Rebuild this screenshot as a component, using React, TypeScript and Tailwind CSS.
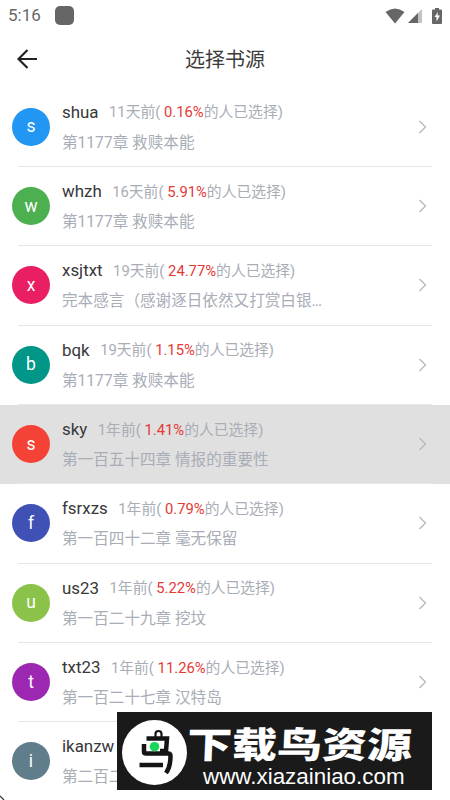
interface BookSource {
  name: string
  color: string
  time: string
  percent: string
  chapter: string
  active?: boolean
}

const sources: BookSource[] = [
  { name: 'shua', color: 'bg-[#2196f3]', time: '11天前', percent: '0.16%', chapter: '第1177章 救赎本能' },
  { name: 'whzh', color: 'bg-[#4caf50]', time: '16天前', percent: '5.91%', chapter: '第1177章 救赎本能' },
  { name: 'xsjtxt', color: 'bg-[#e91e63]', time: '19天前', percent: '24.77%', chapter: '完本感言（感谢逐日依然又打赏白银…' },
  { name: 'bqk', color: 'bg-[#009688]', time: '19天前', percent: '1.15%', chapter: '第1177章 救赎本能' },
  { name: 'sky', color: 'bg-[#f44336]', time: '1年前', percent: '1.41%', chapter: '第一百五十四章 情报的重要性', active: true },
  { name: 'fsrxzs', color: 'bg-[#3f51b5]', time: '1年前', percent: '0.79%', chapter: '第一百四十二章 毫无保留' },
  { name: 'us23', color: 'bg-[#8bc34a]', time: '1年前', percent: '5.22%', chapter: '第一百二十九章 挖坟' },
  { name: 'txt23', color: 'bg-[#9c27b0]', time: '1年前', percent: '11.26%', chapter: '第一百二十七章 汉特岛' },
]

function StatusBar() {
  return (
    <div className="flex h-[31px] shrink-0 items-center pl-2 pr-2 text-[#666]">
      <span className="text-[17px] leading-none">5:16</span>
      <span className="ml-[14px] h-[19px] w-[19px] rounded-[5px] bg-[#666]" />
      <svg className="ml-auto" width="20" height="16" viewBox="0 0 20 16" fill="currentColor">
        <path d="M.5 4Q10-3 19.5 4L10 15.5Z" />
      </svg>
      <svg className="ml-[3px]" width="14" height="15" viewBox="0 0 14 15" fill="currentColor">
        <path d="M14 1V15H0Z" opacity=".4" />
        <path d="M10 5V15H0Z" />
      </svg>
      <svg className="ml-[10px]" width="10" height="16" viewBox="0 0 10 16" fill="currentColor">
        <path d="M3 0h4v1.500h2q1 0 1 1V15q0 1-1 1H1q-1 0-1-1V2.500q0-1 1-1h2Z" />
        <path d="M6 4L2.500 9h2v4.500L8 7.500H5.500Z" fill="#fff" />
      </svg>
    </div>
  )
}

function Header() {
  return (
    <header className="grid h-[56.5px] shrink-0 grid-cols-[1fr_auto_1fr] items-center text-[#3c3c3c]">
      <button className="ml-[17px] w-5" aria-label="返回">
        <svg width="21" height="20" viewBox="0 0 21 20" fill="none" stroke="#222" strokeWidth="2.200">
          <path d="M10.500 1L1.500 10L10.500 19M1.500 10H20" />
        </svg>
      </button>
      <h1 className="pt-[2px] text-[20px] leading-none">选择书源</h1>
    </header>
  )
}

function SourceAvatar({ letter, color }: { letter: string; color: string }) {
  return (
    <div
      className={`mt-[20px] flex h-[38px] w-[38px] shrink-0 items-center justify-center rounded-full text-[17.5px] text-white ${color}`}
    >
      {letter}
    </div>
  )
}

function SourceRow({ source }: { source: BookSource }) {
  return (
    <li className={`flex h-[79.35px] shrink-0 flex-col ${source.active ? 'bg-[#e0e0e0]' : ''}`}>
      <div className="flex min-h-0 flex-1 pl-3">
        <SourceAvatar letter={source.name[0]} color={source.color} />
        <div className="ml-3 min-w-0 flex-1 whitespace-nowrap pt-[11.8px] text-[15.6px] text-[#a8adb6]">
          <div className="flex h-[26px] items-center">
            <span className="text-[16.9px] text-[#383838]">{source.name}</span>
            <span className="ml-[10.5px] text-[14.8px]">
              {source.time}( <span className="text-[#e53935]">{source.percent}</span>的人已选择)
            </span>
          </div>
          <div className="mt-[5px] flex h-[26px] items-center">{source.chapter}</div>
        </div>
        <svg className="mr-[23px] mt-[32px]" width="9" height="14" viewBox="0 0 9 14" fill="none" stroke="#b5b8bd" strokeWidth="1.300">
          <path d="M1.500 1L7.500 7L1.500 13" />
        </svg>
      </div>
      <div className="mx-[18px] h-px shrink-0 bg-[#e6e6e6]" />
    </li>
  )
}

function Watermark() {
  return (
    <div className="absolute left-[117px] top-[712px] flex h-[78px] w-[315px] items-center bg-[#1a1a1a] text-white">
      <svg className="ml-[5px] mt-[2px] shrink-0" width="65" height="65" viewBox="0 0 65 65" fill="none">
        <circle cx="32.500" cy="32.500" r="32.500" fill="#fff" />
        <g stroke="#151515" strokeWidth="4.500">
          <path d="M33.500 18V14Q33.500 11 36.500 11T39.500 14V18" strokeWidth="2.200" />
          <path d="M24.500 18.500H45L44 31H38" />
          <path d="M22 24V32Q22 33.500 24 33.500H46Q48.500 33.500 48.500 36Q48.500 47 44 53" />
          <path d="M17.500 45H41" />
        </g>
        <circle cx="32.500" cy="26.700" r="4.800" fill="#19d65b" />
      </svg>
      <div className="flex flex-col whitespace-nowrap pt-[12px]">
        <span className="origin-left -skew-x-2 scale-x-[1.125] scale-y-[0.900] text-[40px] font-black leading-[40px]">
          下载鸟资源
        </span>
        <span className="-mt-px ml-[16px] font-['Liberation_Sans',sans-serif] text-[22.4px] leading-[24px]">
          www.xiazainiao.com
        </span>
      </div>
    </div>
  )
}

export default function App() {
  return (
    <main className="relative flex h-[800px] w-[450px] flex-col overflow-hidden bg-white font-[Roboto,'Noto_Sans_CJK_SC',sans-serif]">
      <StatusBar />
      <Header />
      <ul className="flex flex-col">
        {sources.map((source) => (
          <SourceRow key={source.name} source={source} />
        ))}
        {/* last row, cut off by the banner */}
        <li className="flex h-[79.35px] shrink-0 pl-3">
          <SourceAvatar letter="i" color="bg-[#607d8b]" />
          <div className="ml-3 whitespace-nowrap pt-[11.8px]">
            <div className="flex h-[26px] items-center text-[16.9px] text-[#383838]">ikanzw</div>
            <div className="mt-[5px] flex h-[26px] items-center text-[15.6px] text-[#a8adb6]">第二百二</div>
          </div>
        </li>
      </ul>
      <svg className="absolute bottom-0 left-0" width="5" height="5" viewBox="0 0 5 5" stroke="#333" strokeWidth="1.200">
        <path d="M0 1L4 5" />
      </svg>
      <Watermark />
    </main>
  )
}
